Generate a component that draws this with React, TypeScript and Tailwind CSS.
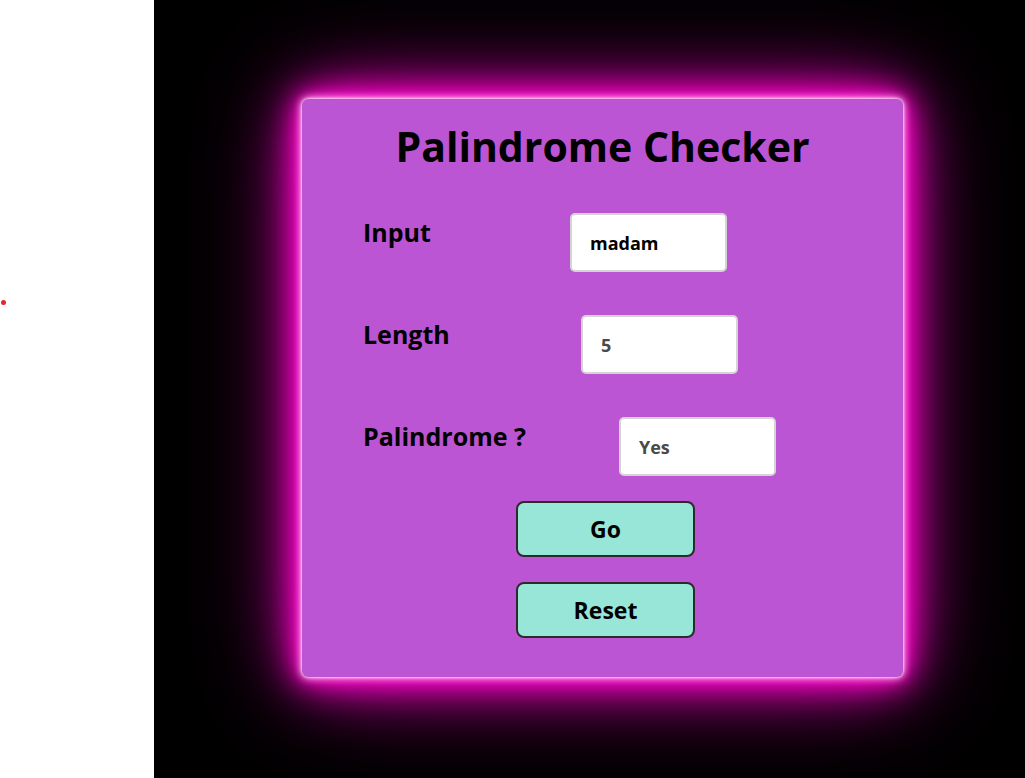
import React from 'react'

const font = { fontFamily: '"Open Sans", "DejaVu Sans", sans-serif' }

const rows = [
  { label: 'Input', value: 'madam', width: 'w-[207px]', readOnly: false },
  { label: 'Length', value: '5', width: 'w-[218px]', readOnly: true },
  { label: 'Palindrome ?', value: 'Yes', width: 'w-[256px]', readOnly: true },
]

export default function App() {
  return (
    <div className="flex h-screen w-full" style={font}>
      <div className="w-[154px] shrink-0 bg-white pt-[300px] pl-[1px]">
        <div className="h-[5px] w-[5px] rounded-full bg-[#e3262f]" />
      </div>
      <div className="flex-1 bg-black pl-[148px] pt-[99px]">
        <div className="flex h-[578px] w-[601px] flex-col rounded-[6px] bg-[#bb55d3] pt-[23px] shadow-[0_0_3px_#fff,0_0_8px_#fff,0_0_16px_#ff1ad9,0_0_28px_#ff00c8,0_0_40px_#ff00c8,0_0_70px_#d000a8,0_0_110px_#8a0070]">
          <h1 className="text-center text-[41px] leading-[48px] font-bold text-black">
            Palindrome Checker
          </h1>
          <div className="mt-[43px] flex flex-col gap-[43px] pl-[61px]">
            {rows.map((row) => (
              <div key={row.label} className="flex items-start">
                <label className={`${row.width} mt-[4px] text-[25px] leading-[30px] font-bold text-black`}>
                  {row.label}
                </label>
                <input
                  readOnly
                  value={row.value}
                  className={`h-[59px] w-[157px] rounded-[5px] border-2 border-[#d4d4d4] bg-white pl-[18px] text-[18px] font-bold outline-none ${
                    row.readOnly ? 'text-[#4a4a4a]' : 'text-black'
                  }`}
                  style={font}
                />
              </div>
            ))}
          </div>
          <div className="mt-[25px] flex flex-col gap-[25px] pl-[214px]">
            <button className="h-[56px] w-[179px] rounded-[8px] border-2 border-[#2b2b2b] bg-[#98e6d8] text-[23px] font-bold text-black" style={font}>
              Go
            </button>
            <button className="h-[56px] w-[179px] rounded-[8px] border-2 border-[#2b2b2b] bg-[#98e6d8] text-[23px] font-bold text-black" style={font}>
              Reset
            </button>
          </div>
        </div>
      </div>
    </div>
  )
}
